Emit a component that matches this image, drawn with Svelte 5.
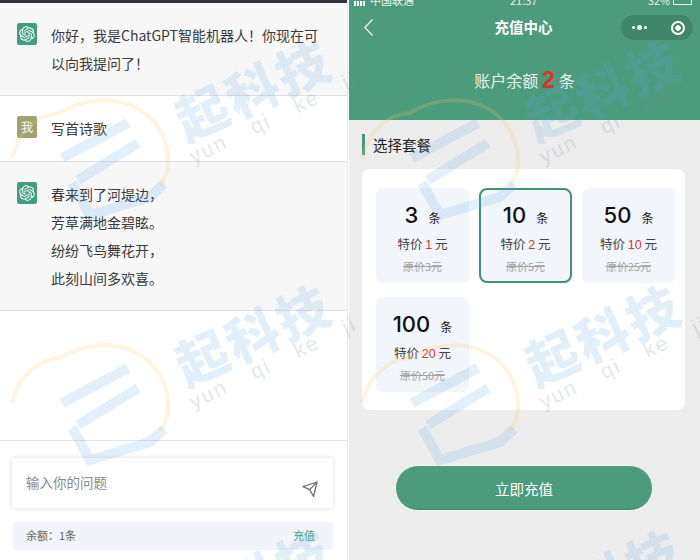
<script>
	const poem = ['春来到了河堤边，', '芳草满地金碧眩。', '纷纷飞鸟舞花开，', '此刻山间多欢喜。'];
	const plans = [
		{ n: 3, price: 1, old: 3 },
		{ n: 10, price: 2, old: 5, on: true },
		{ n: 50, price: 10, old: 25 },
		{ n: 100, price: 20, old: 50 }
	];
	const tiles = [
		[0, -245], [350, -245],
		[0, 0], [350, 0],
		[0, 245], [350, 245],
		[0, 490], [350, 490]
	];
	const gpt =
		'M37.53 16.87C37.98 15.52 38.14 14.1 37.99 12.69C37.84 11.27 37.39 9.91 36.68 8.69C35.61 6.83 33.99 5.37 32.04 4.5C30.09 3.63 27.91 3.4 25.82 3.85C24.88 2.79 23.72 1.94 22.43 1.36C21.13 .79 19.72 .49 18.31 .5C16.17 .5 14.09 1.17 12.36 2.42C10.63 3.68 9.35 5.45 8.69 7.48C7.3 7.76 5.99 8.34 4.84 9.18C3.69 10.01 2.73 11.08 2.03 12.31C.96 14.16 .5 16.3 .72 18.42C.94 20.55 1.84 22.54 3.27 24.13C2.82 25.48 2.66 26.9 2.81 28.31C2.96 29.73 3.41 31.09 4.12 32.31C5.19 34.17 6.81 35.63 8.76 36.5C10.71 37.37 12.89 37.6 14.98 37.15C15.92 38.21 17.08 39.06 18.37 39.64C19.67 40.21 21.08 40.51 22.49 40.5C24.63 40.51 26.71 39.83 28.44 38.58C30.17 37.32 31.46 35.55 32.11 33.52C33.5 33.23 34.82 32.65 35.97 31.82C37.12 30.99 38.07 29.92 38.78 28.68C39.85 26.84 40.3 24.7 40.08 22.57C39.86 20.45 38.96 18.45 37.53 16.87ZM22.5 37.88C20.74 37.89 19.05 37.27 17.7 36.15C17.76 36.12 17.87 36.06 17.94 36.02L25.9 31.42C26.1 31.3 26.27 31.14 26.38 30.94C26.5 30.74 26.56 30.51 26.55 30.28V19.05L29.92 21C29.94 21.01 29.95 21.02 29.97 21.04C29.98 21.05 29.98 21.07 29.99 21.09V30.39C29.98 32.38 29.19 34.28 27.79 35.68C26.39 37.09 24.48 37.88 22.5 37.88ZM6.39 31.01C5.51 29.49 5.2 27.71 5.5 25.98C5.56 26.02 5.66 26.08 5.73 26.12L13.7 30.72C13.9 30.84 14.12 30.9 14.35 30.9C14.58 30.9 14.81 30.84 15.01 30.72L24.73 25.11V29C24.73 29.02 24.73 29.04 24.72 29.06C24.71 29.07 24.7 29.09 24.68 29.1L16.63 33.75C14.91 34.74 12.86 35.01 10.94 34.5C9.03 33.98 7.39 32.73 6.39 31.01ZM4.3 13.62C5.17 12.1 6.55 10.94 8.2 10.33C8.2 10.4 8.19 10.52 8.19 10.61V19.81C8.19 20.04 8.25 20.26 8.37 20.46C8.48 20.66 8.65 20.83 8.85 20.94L18.57 26.55L15.21 28.5C15.19 28.51 15.17 28.52 15.15 28.52C15.13 28.52 15.11 28.52 15.09 28.51L7.04 23.86C5.32 22.86 4.07 21.22 3.55 19.3C3.04 17.39 3.31 15.34 4.3 13.62ZM31.96 20.06L22.23 14.44L25.6 12.5C25.61 12.49 25.63 12.48 25.65 12.48C25.67 12.48 25.69 12.48 25.71 12.49L33.76 17.14C35 17.85 36 18.9 36.66 20.16C37.32 21.42 37.6 22.85 37.48 24.27C37.36 25.69 36.84 27.04 35.97 28.18C35.11 29.31 33.94 30.17 32.6 30.66C32.6 30.59 32.6 30.47 32.6 30.39V21.19C32.61 20.96 32.55 20.73 32.43 20.53C32.32 20.33 32.15 20.17 31.96 20.06ZM35.31 15.01C35.25 14.98 35.14 14.91 35.07 14.87L27.1 10.27C26.91 10.16 26.68 10.09 26.45 10.09C26.22 10.09 25.99 10.16 25.8 10.27L16.07 15.89V12C16.07 11.98 16.08 11.96 16.08 11.94C16.09 11.92 16.1 11.91 16.12 11.89L24.17 7.25C25.41 6.54 26.82 6.19 28.24 6.25C29.66 6.32 31.04 6.78 32.2 7.6C33.37 8.41 34.28 9.54 34.83 10.85C35.38 12.17 35.55 13.61 35.31 15.01ZM14.24 21.94L10.88 20C10.86 19.99 10.84 19.98 10.83 19.96C10.82 19.94 10.81 19.93 10.81 19.91V10.61C10.81 9.18 11.22 7.79 11.98 6.59C12.75 5.39 13.84 4.43 15.13 3.82C16.42 3.22 17.85 2.99 19.26 3.18C20.68 3.36 22.01 3.94 23.1 4.85C23.04 4.88 22.94 4.94 22.87 4.98L14.9 9.59C14.7 9.7 14.54 9.86 14.42 10.06C14.31 10.26 14.25 10.49 14.25 10.72L14.24 21.94ZM16.07 18L20.4 15.5L24.73 18V23L20.4 25.5L16.07 23V18Z';
</script>

<div class="page">
	<section class="chat">
		<div class="topline"></div>
		<div class="msg bot">
			<svg class="avatar" viewBox="-5 -5 51 51"><path d={gpt} fill="#fff" /></svg>
			<div class="body">你好，我是ChatGPT智能机器人！你现在可以向我提问了！</div>
		</div>
		<div class="msg mine">
			<div class="avatar me">我</div>
			<div class="body">写首诗歌</div>
		</div>
		<div class="msg bot">
			<svg class="avatar" viewBox="-5 -5 51 51"><path d={gpt} fill="#fff" /></svg>
			<div class="body">
				{#each poem as line}
					<div>{line}</div>
				{/each}
			</div>
		</div>
		<div class="spacer"></div>
		<div class="composer">
			<div class="input">
				<span>输入你的问题</span>
				<svg class="send" viewBox="0 0 16 16" fill="none" stroke="#6f7078" stroke-width="1.3" stroke-linejoin="round">
					<path d="M1 5.6 15 1 11.6 15.4 7.6 8.6Z" />
					<path d="M7.6 8.6 15 1" />
				</svg>
			</div>
			<div class="quota">
				<span>余额：1条</span>
				<span class="topup">充值</span>
			</div>
		</div>
	</section>

	<section class="shop">
		<header>
			<div class="status">
				<span class="signal"><i></i><i></i><i></i><i></i></span>
				<span>中国联通</span>
				<span class="time">21:37</span>
				<span class="battery">32%<b></b></span>
			</div>
			<div class="nav">
				<svg class="back" viewBox="0 0 9 17" fill="none" stroke="#fff" stroke-width="1.1"><path d="M8.5.5 .8 8.5 8.5 16.5" /></svg>
				<div class="title">充值中心</div>
				<div class="capsule">
					<span class="dots"><i></i><i class="big"></i><i></i></span>
					<span class="target"></span>
				</div>
			</div>
			<div class="balance">账户余额 <em>2</em> 条</div>
		</header>

		<div class="heading">选择套餐</div>

		<div class="plans">
			{#each plans as p}
				<div class="plan" class:on={p.on}>
					<div class="count"><strong>{p.n}</strong><small>条</small></div>
					<div class="price">特价 <em>{p.price}</em> 元</div>
					<div class="old">原价{p.old}元</div>
				</div>
			{/each}
		</div>

		<button class="pay">立即充值</button>
	</section>

	<svg class="watermark" viewBox="0 0 700 560">
		{#each tiles as [x, y]}
			<g transform="translate({x} {y})">
				<path d="M12 158C18 132 38 114 60 113 80 100 118 92 146 114 170 134 174 168 160 186" fill="none" stroke="#f6c667" stroke-width="4" opacity=".2" />
				<path d="M62 158 128 123M78 180 138 143M72 183 90 215 150 197 164 184" fill="none" stroke="#5ba7e0" stroke-width="10" opacity=".17" />
				<text class="brand" transform="translate(256 95) rotate(-24)">起科技</text>
				<text class="pinyin" transform="translate(276 124) rotate(-26)">yun qi ke ji</text>
			</g>
		{/each}
	</svg>
</div>

<style>
	:global(body) {
		margin: 0;
	}
	.page {
		position: relative;
		display: flex;
		width: 700px;
		height: 560px;
		overflow: hidden;
		background: #fff;
		font-family: 'Noto Sans CJK SC', 'Liberation Sans', sans-serif;
		color: #333;
	}

	.chat {
		display: flex;
		flex-direction: column;
		width: 347px;
		margin-right: 1px;
		border-right: 1px solid #e9e9e9;
	}
	.topline {
		height: 3px;
		background: #33333d;
	}
	.msg {
		display: flex;
		gap: 14px;
		padding: 18px 22px 18px 17px;
		border-bottom: 1px solid #dfe0e2;
	}
	.msg.mine {
		padding-bottom: 19px;
	}
	.bot {
		background: #f7f7f8;
	}
	.avatar {
		flex: none;
		width: 20px;
		height: 22px;
		margin-top: 2px;
		border-radius: 2px;
		background: #419d80;
	}
	.me {
		background: #a0a274;
		color: #fff;
		font-size: 12px;
		line-height: 22px;
		text-align: center;
	}
	.body {
		font-size: 14px;
		line-height: 28px;
		color: #3a3a3a;
	}
	.spacer {
		flex: 1;
	}
	.composer {
		padding: 17px 14px 10px 12px;
		border-top: 1px solid #e3e4e6;
	}
	.input {
		position: relative;
		height: 50px;
		padding: 0 14px;
		line-height: 48px;
		font-size: 13.5px;
		color: #8a8a8a;
		background: #fff;
		box-shadow: 0 0 5px rgba(0, 0, 0, 0.14);
	}
	.send {
		position: absolute;
		right: 15px;
		top: 23px;
		width: 16px;
		height: 16px;
	}
	.quota {
		display: flex;
		justify-content: space-between;
		height: 28px;
		margin: 14px 0 0 1px;
		padding: 0 18px 0 13px;
		line-height: 27px;
		font-size: 11px;
		color: #666;
		background: #f1f5f9;
		border-radius: 2px;
	}
	.topup {
		color: #47a88a;
	}

	.shop {
		position: relative;
		flex: 1;
		background: #ededed;
	}
	header {
		height: 120px;
		background: #4c9b7d;
		color: #fff;
	}
	.status {
		display: flex;
		align-items: flex-end;
		gap: 5px;
		height: 6px;
		overflow: hidden;
		padding: 0 8px 0 5px;
		font-size: 11px;
		line-height: 11px;
		color: #e6f2ec;
	}
	.signal {
		display: flex;
		gap: 1px;
		align-items: flex-end;
	}
	.signal i {
		width: 2px;
		height: 5px;
		background: #fff;
	}
	.time {
		margin-left: 91px;
	}
	.battery {
		margin-left: auto;
	}
	.battery b {
		display: inline-block;
		width: 17px;
		height: 8px;
		margin-left: 3px;
		border: 1px solid #e6f2ec;
	}
	.nav {
		position: relative;
		display: flex;
		align-items: center;
		justify-content: center;
		height: 44px;
	}
	.back {
		position: absolute;
		left: 15px;
		top: 13px;
		width: 9px;
		height: 17px;
	}
	.title {
		margin: -4px 2px 0 0;
		font-size: 14.5px;
		font-weight: 700;
	}
	.capsule {
		position: absolute;
		right: 7px;
		top: 9px;
		display: flex;
		align-items: center;
		justify-content: space-between;
		box-sizing: border-box;
		width: 72px;
		height: 25px;
		padding: 0 8px 0 11px;
		border-radius: 13px;
		background: rgba(40, 90, 70, 0.32);
	}
	.dots {
		display: flex;
		align-items: center;
		gap: 2px;
	}
	.dots i {
		width: 3px;
		height: 3px;
		border-radius: 50%;
		background: #fff;
	}
	.dots .big {
		width: 5px;
		height: 5px;
	}
	.target {
		width: 14px;
		height: 14px;
		box-sizing: border-box;
		border: 2px solid #fff;
		border-radius: 50%;
		background: radial-gradient(circle, #fff 0 2.5px, transparent 3px);
	}
	.balance {
		margin-top: 14px;
		text-align: center;
		font-size: 16px;
		line-height: 32px;
		color: #e8f4ee;
	}
	.balance em {
		font-style: normal;
		font-size: 24px;
		font-weight: 700;
		font-family: 'Liberation Sans', sans-serif;
		color: #e0322c;
		vertical-align: -1px;
	}
	.heading {
		margin: 14px 0 0 13px;
		padding-left: 8px;
		border-left: 3px solid #46987b;
		font-size: 14.5px;
		line-height: 21px;
		color: #222;
	}
	.plans {
		display: grid;
		grid-template-columns: repeat(3, 93px);
		gap: 14px 10px;
		align-content: start;
		box-sizing: border-box;
		width: 323px;
		height: 241px;
		margin: 14px 0 0 13px;
		padding: 19px 0 0 14px;
		background: #fff;
		border-radius: 8px;
	}
	.plan {
		box-sizing: border-box;
		height: 95px;
		padding-top: 14px;
		background: #f2f5fa;
		border-radius: 7px;
		text-align: center;
	}
	.plan.on {
		border: 2px solid #3f9377;
		padding-top: 12px;
		border-radius: 8px;
	}
	.count {
		line-height: 27px;
		color: #111;
	}
	.count strong {
		font-family: Inter, 'Liberation Sans', sans-serif;
		font-size: 22px;
		font-weight: 500;
	}
	.count small {
		margin-left: 10px;
		font-size: 12px;
	}
	.price {
		margin-top: 3px;
		font-size: 12.5px;
		line-height: 20px;
		color: #444;
	}
	.price em {
		font-style: normal;
		font-family: 'Liberation Sans', sans-serif;
		color: #d5372f;
	}
	.old {
		margin-top: 3px;
		font-size: 11px;
		line-height: 16px;
		color: #a2a2a2;
		text-decoration: line-through;
	}
	.pay {
		display: block;
		box-sizing: border-box;
		width: 258px;
		height: 46px;
		margin: 55px 0 0 46px;
		border: 1px solid #f3f8f5;
		border-radius: 23px;
		background: #4c9b7d;
		color: #fff;
		font-family: inherit;
		font-size: 14.5px;
		box-shadow: inset 0 -1px 0 #3b8a6c;
	}

	.watermark {
		position: absolute;
		inset: 0;
		width: 700px;
		height: 560px;
		pointer-events: none;
	}
	.brand {
		font-size: 52px;
		font-weight: 900;
		text-anchor: middle;
		dominant-baseline: middle;
		letter-spacing: 3px;
		fill: #5ba7e0;
		opacity: 0.17;
	}
	.pinyin {
		font-family: 'Liberation Sans', sans-serif;
		font-size: 21px;
		text-anchor: middle;
		letter-spacing: 2px;
		word-spacing: 20px;
		fill: #7a8fa0;
		opacity: 0.2;
	}
</style>
